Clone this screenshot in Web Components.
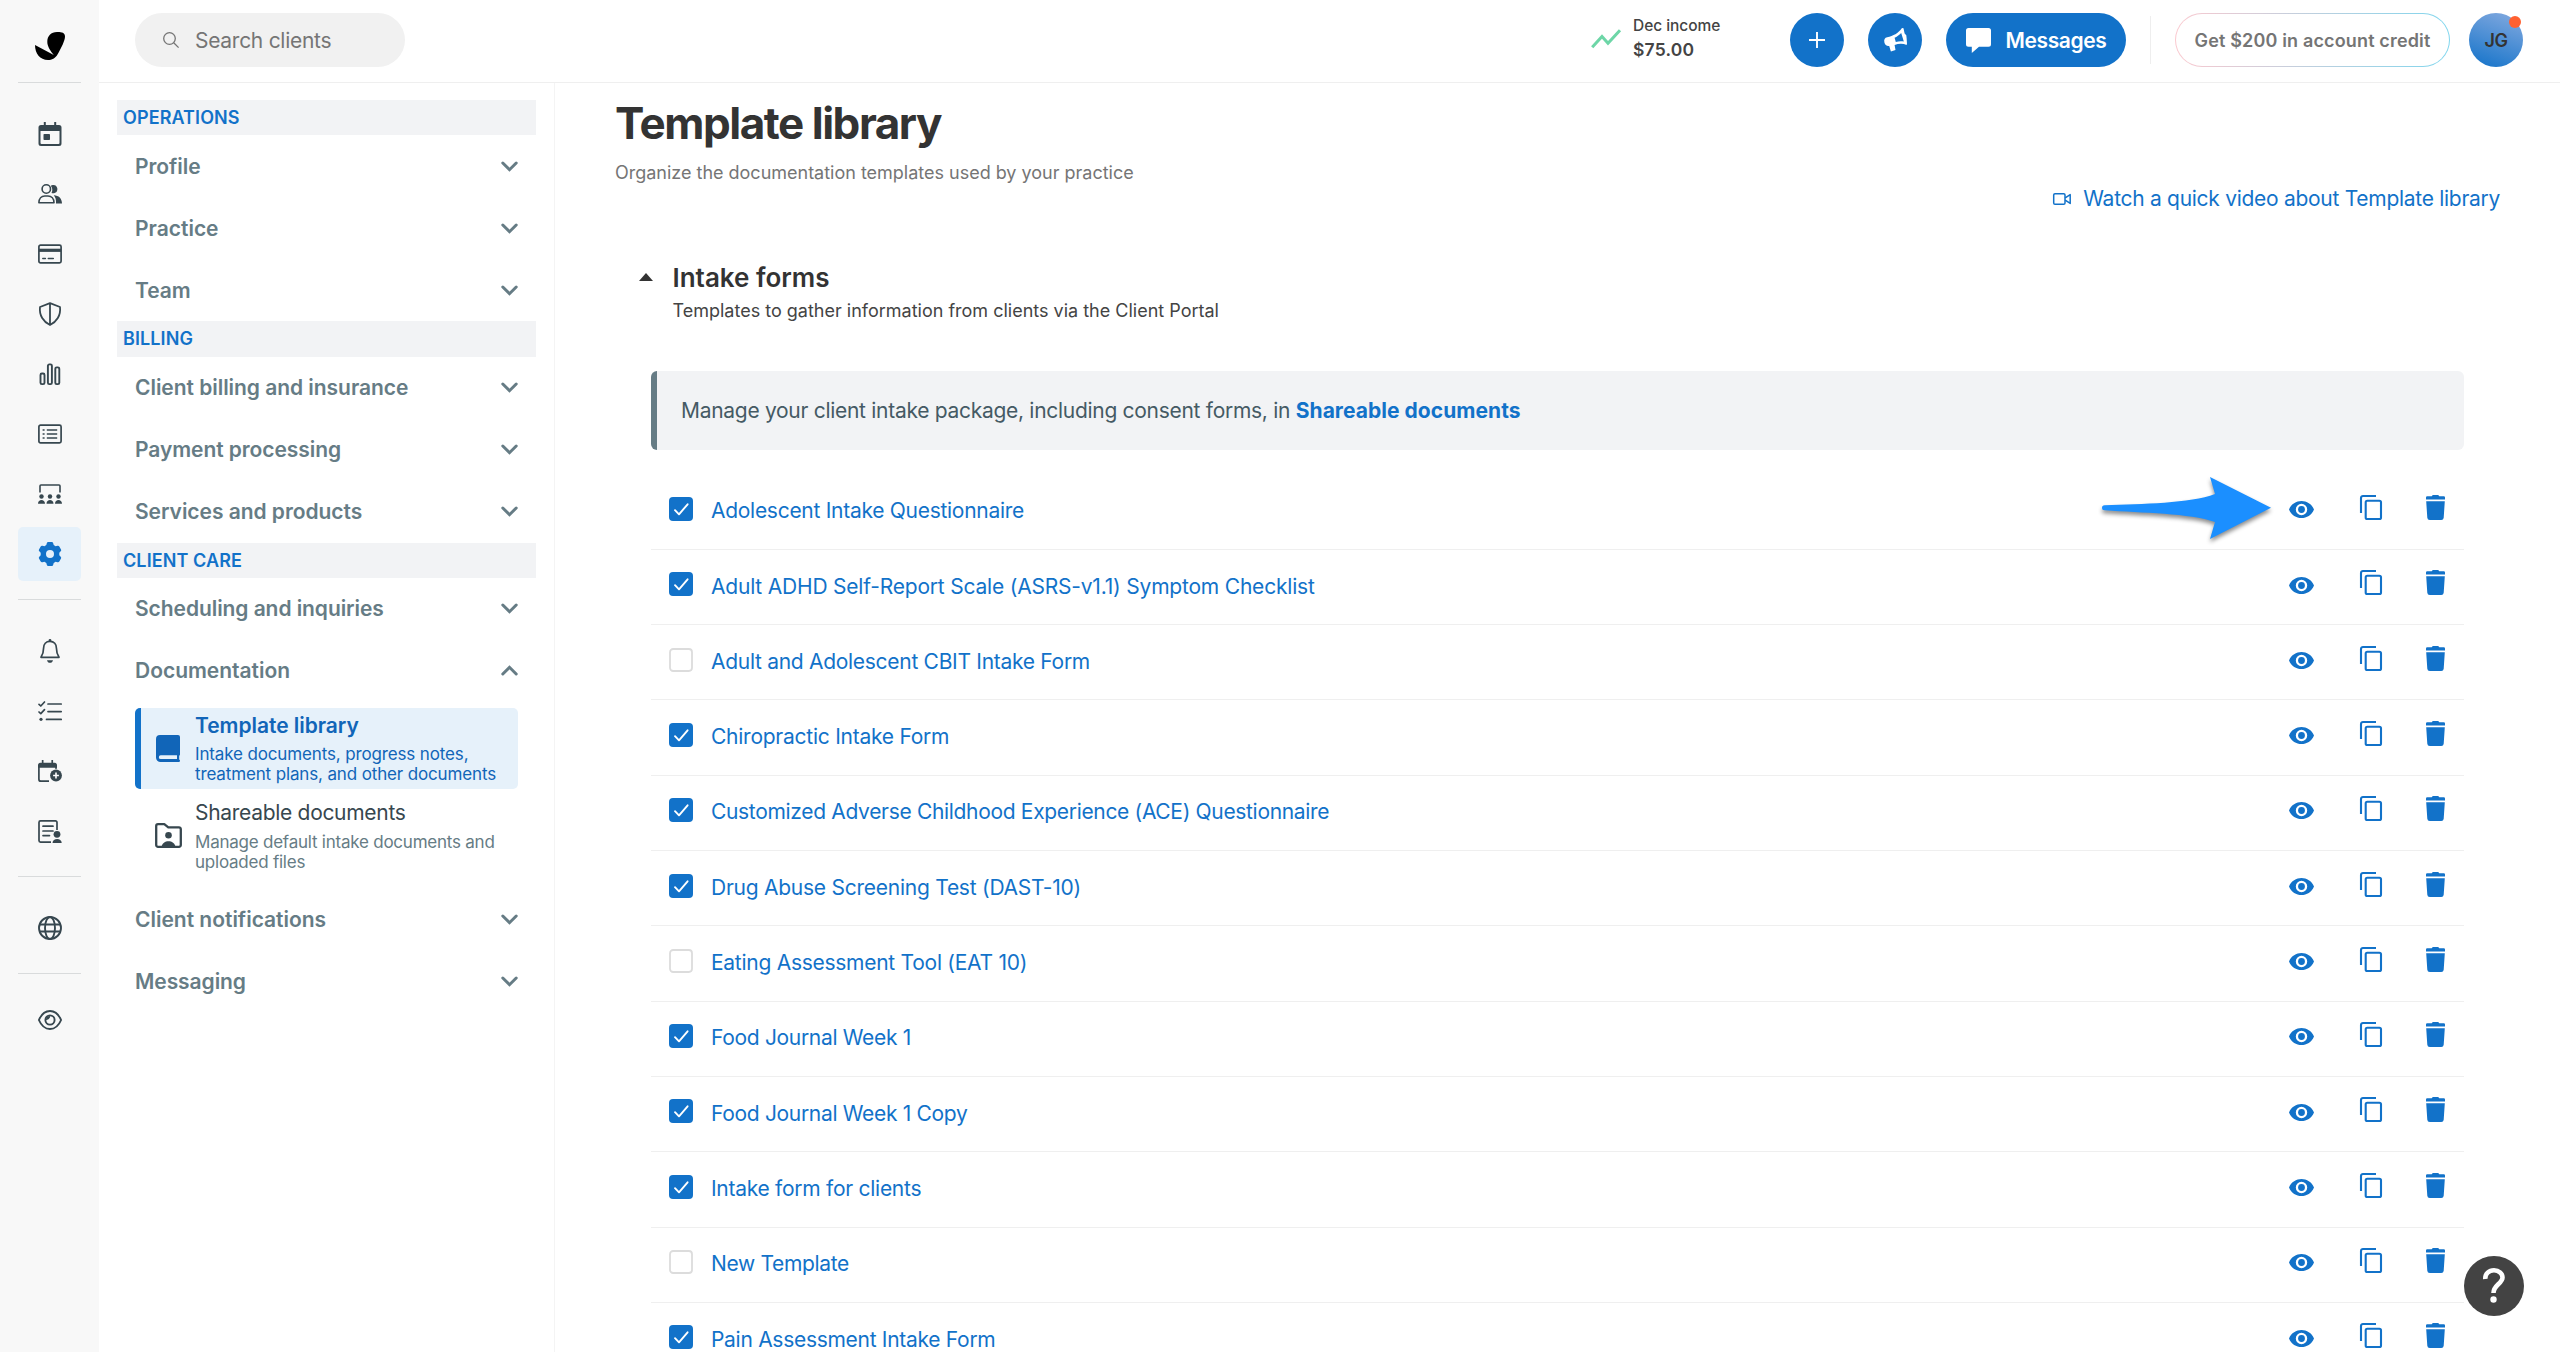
<!DOCTYPE html>
<html lang="en">
<head>
<meta charset="utf-8">
<title>Template library</title>
<style>
html,body{margin:0;height:100%;overflow:hidden;background:#fff}
body{font-family:Inter,"Liberation Sans",sans-serif;color:#333}
</style>
</head>
<body>
<app-shell>
  <nav-rail slot="rail"></nav-rail>
  <top-bar slot="top"></top-bar>
  <settings-nav slot="side">
    <nav-section label="OPERATIONS">
      <nav-item ls="-.05px">Profile</nav-item>
      <nav-item ls="0px">Practice</nav-item>
      <nav-item>Team</nav-item>
    </nav-section>
    <nav-section label="BILLING">
      <nav-item ls="-.04px">Client billing and insurance</nav-item>
      <nav-item>Payment processing</nav-item>
      <nav-item ls="-.04px">Services and products</nav-item>
    </nav-section>
    <nav-section label="CLIENT CARE">
      <nav-item>Scheduling and inquiries</nav-item>
      <nav-item ls="-.02px">Documentation</nav-item>
      <nav-card active icon="book" text="Intake documents, progress notes, treatment plans, and other documents">Template library</nav-card>
      <nav-card icon="folder" text="Manage default intake documents and uploaded files">Shareable documents</nav-card>
      <nav-item ls="-.01px">Client notifications</nav-item>
      <nav-item>Messaging</nav-item>
    </nav-section>
  </settings-nav>
  <library-page slot="main"></library-page>
</app-shell>

<script>
const ICONS = {
  logo: ['0 0 30 28', '<path fill="#000" d="M22 .1C26.500 0 30 .6 30 4.500C30 8.500 26.500 15.500 22.500 22.500C20 26.500 17 28 13 28C5 28 0 21.500 0 13L18.800 23C15.500 19 12.300 14.500 12.300 10C12.300 4 16 .2 22 .1Z"/>'],
  search: ['0 0 16 16', '<g fill="none" stroke="currentColor" stroke-width="1.300"><circle cx="6.500" cy="6.500" r="5.800"/><path d="M10.700 10.700L15.600 15.600"/></g>'],
  calendar: ['0 0 24 24', '<path fill="currentColor" d="M5.800 0h2v3h8.400V0h2v3H21a2.500 2.500 0 0 1 2.500 2.500v16A2.500 2.500 0 0 1 21 24H3A2.500 2.500 0 0 1 .5 21.500v-16A2.500 2.500 0 0 1 3 3h2.800zM2.500 9v12a1 1 0 0 0 1 1h17a1 1 0 0 0 1-1V9z" fill-rule="evenodd"/><rect x="5.500" y="12" width="6.500" height="6" rx=".8" fill="currentColor"/>'],
  people: ['0 0 24 20', '<circle cx="8.300" cy="5" r="4.200" fill="none" stroke="currentColor" stroke-width="1.600"/><path fill="none" stroke="currentColor" stroke-width="1.600" stroke-linejoin="round" d="M.9 18.800C.9 14.400 3.500 12 6.800 12H10c3.400 0 6 2.400 6 6.800z"/><path fill="currentColor" d="M12.800 1.700A4.200 4.200 0 1 1 13.500 9a7 7 0 0 0-.7-7.300M15.800 11.200c5 .2 8.200 3.200 8.200 8.400h-6c.2-3.600-.4-6.400-2.200-8.400"/>'],
  card: ['0 0 24 20', '<rect x=".9" y="1.200" width="22.200" height="17.600" rx="1.600" fill="none" stroke="currentColor" stroke-width="1.700"/><path d="M1 6.300h22" stroke="currentColor" stroke-width="3.200"/><path d="M4.800 14.500h2.600M10.300 14.500h5" stroke="currentColor" stroke-width="1.500" stroke-linecap="round"/>'],
  shield: ['0 0 24 24', '<path fill="none" stroke="currentColor" stroke-width="1.800" stroke-linejoin="round" d="M12 1.200L22 5C23 13.500 18.500 20 12 23C5.500 20 1 13.500 2 5zM12 1.200V23"/>'],
  bars: ['0 0 24 22', '<g fill="none" stroke="currentColor" stroke-width="1.900"><rect x="2.500" y="10.500" width="4" height="10.600" rx="1.400"/><rect x="9.900" y="1.400" width="4" height="19.700" rx="1.400"/><rect x="17.300" y="4.400" width="4" height="16.700" rx="1.400"/></g>'],
  list: ['0 0 24 20', '<rect x=".9" y="1.200" width="22.200" height="17.600" rx="1.600" fill="none" stroke="currentColor" stroke-width="1.700"/><path d="M4.600 6h2M4.600 10h2M4.600 14h2M8.800 6h10.400M8.800 10h10.400M8.800 14h10.400" stroke="currentColor" stroke-width="1.400"/>'],
  classroom: ['0 0 24 20', '<path fill="none" stroke="currentColor" stroke-width="1.600" d="M2 8.500V2A1 1 0 0 1 3 1h18a1 1 0 0 1 1 1v6.500"/><g fill="currentColor"><circle cx="3.500" cy="12.500" r="2.200"/><circle cx="12" cy="12.500" r="2.200"/><circle cx="20.500" cy="12.500" r="2.200"/><path d="M0 19.700c0-5 7-5 7 0zM8.500 19.700c0-5 7-5 7 0zM17 19.700c0-5 7-5 7 0z"/></g>'],
  gear: ['0 0 24 24', '<path fill="currentColor" fill-rule="evenodd" d="M10.300 0h3.400c.8 0 1.300.4 1.500 1.200l.5 1.900 1.900 1.100 1.900-.5c.8-.2 1.400 0 1.800.7l1.700 3c.4.700.3 1.300-.3 1.900L21.300 10.700v2.600l1.400 1.400c.6.6.7 1.200.3 1.900l-1.700 3c-.4.700-1 .9-1.800.7l-1.900-.5-1.900 1.100-.5 1.900c-.2.800-.7 1.200-1.500 1.200h-3.400c-.8 0-1.300-.4-1.500-1.200l-.5-1.900-1.900-1.100-1.900.5c-.8.2-1.400 0-1.800-.7l-1.700-3c-.4-.7-.3-1.300.3-1.900l1.400-1.400v-2.600L1.300 9.300C.7 8.700.6 8.100 1 7.400l1.700-3c.4-.7 1-.9 1.800-.7l1.900.5 1.900-1.100.5-1.900C9 .4 9.500 0 10.300 0M12 8a4 4 0 1 0 0 8a4 4 0 0 0 0-8"/>'],
  bell: ['0 0 24 24', '<path fill="none" stroke="currentColor" stroke-width="1.700" stroke-linejoin="round" d="M12 2.400C7.900 2.400 5.600 5.200 5.600 9C5.600 14 4.700 15.500 3 18.300H21C19.300 15.500 18.400 14 18.400 9C18.400 5.200 16.100 2.400 12 2.400Z"/><path fill="currentColor" d="M10.600 1.400a1.400 1.400 0 0 1 2.800 0v1.500h-2.800zM9 21.300h6c-.5 3.400-5.500 3.400-6 0"/>'],
  checks: ['0 0 24 20', '<g fill="none" stroke="currentColor" stroke-width="1.700" stroke-linecap="round" stroke-linejoin="round"><path d="M1 3.300L2.800 5L6.500 1M1 11L2.800 12.700L6.500 8.700M10 3h13.200M10 10.600h13.200M8.500 18.400h14.700"/></g><circle cx="3" cy="18.300" r="1.600" fill="currentColor"/>'],
  calplus: ['0 0 24 22', '<path fill="none" stroke="currentColor" stroke-width="1.700" d="M18 9V5.500M.9 6v13.200a2 2 0 0 0 2 2H11"/><path fill="currentColor" d="M3.800 0h1.700v2.800h7.900V0h1.700v2.800h1.400A2.500 2.500 0 0 1 19 5.300V7.800H0V5.300A2.500 2.500 0 0 1 2.500 2.800h1.300z"/><circle cx="18" cy="15.500" r="6.800" fill="#f8f8f8"/><circle cx="18" cy="15.500" r="5.900" fill="currentColor"/><path d="M18 12.600v5.800M15.100 15.500h5.800" stroke="#fff" stroke-width="1.600"/>'],
  docuser: ['0 0 24 23', '<path fill="none" stroke="currentColor" stroke-width="1.700" d="M19 10V2.400A1.500 1.500 0 0 0 17.500.9h-15A1.500 1.500 0 0 0 1 2.400v18.200A1.500 1.500 0 0 0 2.500 22.100H13"/><path d="M5 6.200h10M5 11h10M5 15.600h6.500" stroke="currentColor" stroke-width="1.700" stroke-linecap="round"/><circle cx="19" cy="14.300" r="3.400" fill="currentColor"/><path fill="currentColor" d="M14.500 23c0-5.500 9.200-5.500 9.200 0z"/>'],
  globe: ['0 0 24 24', '<g fill="none" stroke="currentColor" stroke-width="1.900"><circle cx="12" cy="12" r="11"/><ellipse cx="12" cy="12" rx="5" ry="11"/><path d="M1.500 8.500h21M1.500 15.500h21"/></g>'],
  eyeline: ['0 0 24 20', '<path fill="none" stroke="currentColor" stroke-width="1.900" stroke-linejoin="round" d="M.9 10C6-2 18-2 23.100 10C18 22 6 22 .9 10Z"/><circle cx="12" cy="10" r="4.600" fill="none" stroke="currentColor" stroke-width="1.900"/><path fill="currentColor" d="M8 10a4 4 0 0 1 4-4c.6 1.500-1.500 4-4 4"/>'],
  down: ['0 0 17 11', '<path fill="none" stroke="currentColor" stroke-width="3" stroke-linecap="round" d="M1.800 2L8.500 8.700L15.200 2"/>'],
  up: ['0 0 17 11', '<path fill="none" stroke="currentColor" stroke-width="3" stroke-linecap="round" d="M1.800 9L8.500 2.300L15.200 9"/>'],
  book: ['0 0 24 27', '<path fill="#1165b8" fill-rule="evenodd" d="M4 0H22a2 2 0 0 1 2 2V19.500a1.500 1.500 0 0 1-.8 1.300v3.600c.5.200.8.700.8 1.300S23.500 27 22.800 27H4.500A4.500 4.500 0 0 1 0 22.500V4A4 4 0 0 1 4 0M4.700 20.300a1.850 1.850 0 0 0 0 3.700H21V20.300z"/>'],
  folder: ['0 0 27 25', '<path fill="none" stroke="#37474f" stroke-width="2.300" stroke-linejoin="round" d="M3 1.200H9.300L13.300 4.400H24A1.800 1.800 0 0 1 25.800 6.200V22A1.800 1.800 0 0 1 24 23.800H3A1.800 1.800 0 0 1 1.200 22V3A1.800 1.800 0 0 1 3 1.200Z"/><circle cx="13.500" cy="12.300" r="3.300" fill="#37474f"/><path fill="#37474f" d="M6.500 24C7.500 16.200 19.500 16.200 20.500 24Z"/>'],
  trend: ['0 0 30 20', '<path fill="none" stroke="#6dd6a7" stroke-width="3" stroke-linejoin="miter" d="M1.200 18.300L11 7.500L17 14.200L29 1.200"/>'],
  plus: ['0 0 16 16', '<path stroke="#fff" stroke-width="1.900" d="M8 0v16M0 8h16"/>'],
  horn: ['0 0 23 24', '<path fill="#fff" fill-rule="evenodd" d="M18 0L19.500 .2L20.600 5.600Q23 7 22.600 10L23 15.600L22.600 17C19 15.400 14.500 15.600 10.600 17L11.500 22L6.900 23.400L5.200 18C2.800 18.300 1 17.300 .4 14.600C-.3 11.500 .8 9.700 3.200 9.200C9.500 7.800 14 5.500 18 0ZM17.200 5C15.200 7.200 12.800 8.800 10.600 9.800L11.800 14C14.500 13.100 17.200 12.900 19.800 13.500Z"/>'],
  chat: ['0 0 25 25', '<path fill="#fff" d="M2.500 0h20A2.500 2.500 0 0 1 25 2.500v13.800a2.500 2.500 0 0 1-2.500 2.500H13L5.800 25V18.800H2.500A2.500 2.500 0 0 1 0 16.300V2.500A2.500 2.500 0 0 1 2.500 0"/>'],
  video: ['0 0 18 12', '<g fill="none" stroke="#1272c9" stroke-width="1.500"><rect x=".7" y=".7" width="11.300" height="10.600" rx="1.300"/><path stroke-linejoin="round" d="M12.200 4.800L17.200 1.600V10.400L12.200 7.200"/></g>'],
  tri: ['0 0 14 8', '<path fill="#333" d="M0 8L7 0L14 8Z"/>'],
  check: ['0 0 24 24', '<rect width="24" height="24" rx="4" fill="#1272c9"/><path fill="none" stroke="#fff" stroke-width="1.900" stroke-linecap="round" stroke-linejoin="round" d="M6 13.200L10 17.300L18.600 7.300"/>'],
  box: ['0 0 24 24', '<rect x="1" y="1" width="22" height="22" rx="3.200" fill="#fff" stroke="#dcdcdc" stroke-width="1.800"/>'],
  eye: ['0 0 25 17', '<path fill="#1272c9" fill-rule="evenodd" d="M0 8.500C4.500-2.900 20.500-2.900 25 8.500C20.500 19.900 4.500 19.900 0 8.500M12.500 2.800a5.700 5.700 0 1 0 0 11.400a5.700 5.700 0 0 0 0-11.400"/><circle cx="12.500" cy="8.500" r="3.400" fill="#1272c9"/>'],
  copy: ['0 0 22 25', '<g fill="none" stroke="#1272c9" stroke-width="2.100"><path d="M1 18V3a2 2 0 0 1 2-2H16"/><rect x="5.700" y="5.700" width="15.300" height="18.300" rx="1.600"/></g>'],
  trash: ['0 0 19 25', '<path fill="#1272c9" d="M1.200 1.200H5.700L6.800 0h5.400l1.100 1.200h4.500A1.200 1.200 0 0 1 19 2.400V4.400H0V2.400A1.200 1.200 0 0 1 1.200 1.200M.2 6.200H18.800L17.700 22.700A2.500 2.500 0 0 1 15.200 25H3.800A2.500 2.500 0 0 1 1.300 22.700Z"/>'],
  question: ['0 0 22 36', '<path fill="none" stroke="#fff" stroke-width="4.600" d="M2.300 11C2 5.500 6 2.300 11 2.300C16 2.300 19.500 5.500 19.500 9.500C19.500 15.500 10.500 17 10.500 25"/><circle cx="10.500" cy="31.500" r="3.200" fill="#fff"/>'],
  arrow: ['0 0 170 64', '<path fill="#1b8fff" d="M2.500 28.200C40 26.800 88 26.500 113 17L108 0L169 30.800L108 62L113 45C88 36 40 36 2.500 33.200A2.500 2.500 0 0 1 2.500 28.200Z"/>']
};

const define = (name, css, html) => customElements.define(name, class extends HTMLElement {
  connectedCallback() {
    if (this.shadowRoot) return;
    const root = this.attachShadow({ mode: 'open' });
    root.innerHTML = `<style>:host,*{box-sizing:border-box}${css}</style>${typeof html === 'function' ? html(this) : html}`;
  }
});

define('sp-icon', ':host{display:block;flex:none}svg{display:block;width:100%;height:100%;overflow:visible}', el => {
  const [box, body] = ICONS[el.getAttribute('name')];
  const [, , w, h] = box.split(' ');
  el.style.width = w + 'px';
  el.style.height = h + 'px';
  return `<svg viewBox="${box}" preserveAspectRatio="none">${body}</svg>`;
});

define('app-shell', `:host{display:grid;grid-template-columns:99px 1fr;height:1352px;overflow:hidden}
.col{display:grid;grid-template-rows:83px 1fr;min-width:0;min-height:0}
.body{display:grid;grid-template-columns:456px 1fr;min-height:0}`,
`<slot name="rail"></slot><div class="col"><slot name="top"></slot><div class="body"><slot name="side"></slot><slot name="main"></slot></div></div>`);

define('rail-item', `:host{display:flex;height:60px;align-items:center;justify-content:center;width:63px;color:#37474f}
:host([active]){color:#1272c9;height:54px;margin:3px 0;background:#e6f1fa;border-radius:5px}`,
el => `<sp-icon name="${el.getAttribute('icon')}"></sp-icon>`);

define('nav-rail', `:host{display:flex;flex-direction:column;align-items:center;background:#f8f8f8;height:1352px}
.logo{height:82px;padding-top:32px}
hr{width:63px;height:1px;border:0;background:#d9dbdc;margin:0;flex:none}`,
`<div class="logo"><sp-icon name="logo"></sp-icon></div><hr>
<rail-item icon="calendar" style="margin-top:21px"></rail-item><rail-item icon="people"></rail-item><rail-item icon="card"></rail-item><rail-item icon="shield"></rail-item><rail-item icon="bars"></rail-item><rail-item icon="list"></rail-item><rail-item icon="classroom"></rail-item><rail-item icon="gear" active></rail-item>
<hr style="margin:15px 0 21px"><rail-item icon="bell"></rail-item><rail-item icon="checks"></rail-item><rail-item icon="calplus"></rail-item><rail-item icon="docuser"></rail-item>
<hr style="margin:15px 0 21px"><rail-item icon="globe"></rail-item><hr style="margin:15px 0 16px"><rail-item icon="eyeline"></rail-item>`);

define('top-bar', `:host{display:flex;align-items:center;height:83px;border-bottom:1px solid #efefef;padding:0 37px 2px 36px}
.search{display:flex;align-items:center;width:270px;height:54px;border-radius:27px;background:#f1f1f1;color:#757575;padding-left:28px;gap:16px;font-size:21px;letter-spacing:-.28px}
.income{display:flex;align-items:center;gap:12px;margin-left:auto;width:199px;color:#444}
.income div{display:flex;flex-direction:column;margin-top:-4.600px}
.income sp-icon{margin-top:-3px}
.a{font-size:15.500px;font-weight:500;line-height:24px;letter-spacing:-.05px}
.b{font-size:17.500px;font-weight:600;line-height:24px;letter-spacing:.2px}
.btn{display:flex;align-items:center;justify-content:center;height:54px;width:54px;border-radius:27px;background:#1272c9;flex:none}
.msg{width:180px;gap:15px;color:#fff;font-weight:600;font-size:21px;letter-spacing:-.38px}
.sep{width:1px;height:48px;background:#eee;margin:0 24px}
.credit{width:275px;height:54px;border-radius:27px;border:1.500px solid transparent;background:linear-gradient(#fff,#fff) padding-box,linear-gradient(90deg,#fbc9cf,#7fd6ee) border-box;display:flex;align-items:center;justify-content:center;font-size:18px;font-weight:600;color:#757575;letter-spacing:.16px}
.av{position:relative;margin-left:19px;background:linear-gradient(20deg,#1272c9,#86abe0);color:#333;font-size:18px;font-weight:600;letter-spacing:-.4px}
.dot{position:absolute;right:2px;top:3px;width:12px;height:12px;border-radius:50%;background:#ff6030}`,
`<div class="search"><sp-icon name="search"></sp-icon><span>Search clients</span></div>
<div class="income"><sp-icon name="trend"></sp-icon><div><span class="a">Dec income</span><span class="b">$75.00</span></div></div>
<div class="btn"><sp-icon name="plus"></sp-icon></div>
<div class="btn" style="margin:0 24px"><sp-icon name="horn"></sp-icon></div>
<div class="btn msg"><sp-icon name="chat"></sp-icon><span>Messages</span></div>
<div class="sep"></div><div class="credit">Get $200 in account credit</div>
<div class="btn av">JG<i class="dot"></i></div>`);

define('settings-nav', `:host{display:flex;flex-direction:column;padding:17px 18px 0;border-right:1px solid #f4f4f4}`, `<slot></slot>`);

define('nav-section', `:host{display:flex;flex-direction:column;flex:none}
.bar{height:35.300px;background:#f2f3f5;color:#1272c9;font-size:18px;font-weight:600;line-height:35px;padding-left:6px;letter-spacing:.1px}`,
el => `<div class="bar">${el.getAttribute('label')}</div><slot></slot>`);

define('nav-item', `:host{display:flex;height:62px;align-items:center;justify-content:space-between;padding:0 18.500px 0 18px;color:#667c85;font-size:21px;font-weight:600;letter-spacing:-.07px}`,
el => { if (el.getAttribute('ls')) el.style.letterSpacing = el.getAttribute('ls');
  const open = el.nextElementSibling && el.nextElementSibling.localName === 'nav-card';
  return `<span><slot></slot></span><sp-icon name="${open ? 'up' : 'down'}"></sp-icon>`; });

define('nav-card', `:host{display:flex;align-items:center;margin:6.500px 18px 12.500px 18px;height:80px;padding-left:20px;color:#667c85}
:host([active]){background:#e6f1fa;border-left:6px solid #1272c9;border-radius:5px;padding-left:15px;height:81px;margin-top:6.500px;margin-bottom:.5px}
:host([active]) sp-icon{margin-right:15px}sp-icon{margin:-1px 13px 0 0}
.t{font-size:21px;line-height:24.400px;margin-bottom:6px;letter-spacing:-.3px;color:#37474f}
:host([active]) .t{font-weight:600;color:#1165b8;letter-spacing:-.04px}
.d{font-size:17px;line-height:20px;letter-spacing:-.23px;width:312px}
:host([active]) .d{color:#1165b8;letter-spacing:-.14px}`,
el => `<sp-icon name="${el.getAttribute('icon')}"></sp-icon><div><div class="t"><slot></slot></div><div class="d">${el.getAttribute('text')}</div></div>`);

define('template-row', `:host{display:flex;flex:none;height:75.300px;border-bottom:1px solid #efefef;padding:0 19px 0 18px;align-items:flex-start}
.lab{font-size:21px;line-height:30px;color:#1272c9;letter-spacing:-.27px;margin:21.700px auto 0 18px}
.chk{margin-top:22.500px}
.acts{display:flex;align-items:flex-start;margin-top:20.500px}`,
el => `<sp-icon class="chk" name="${el.hasAttribute('off') ? 'box' : 'check'}"></sp-icon>
<span class="lab" style="${el.getAttribute('ls') ? 'letter-spacing:' + el.getAttribute('ls') : ''}"><slot></slot></span>
<div class="acts"><sp-icon name="eye" style="margin-top:6.200px"></sp-icon><sp-icon name="copy" style="margin:0 44px 0 46px"></sp-icon><sp-icon name="trash"></sp-icon></div>`);

define('info-banner', `:host{display:block;flex:none;height:79px;border-left:6px solid #667c85;border-radius:6px;background:#f2f3f5;color:#455a64;font-size:21px;line-height:79px;padding-left:24px;letter-spacing:-.29px}
::slotted(b){color:#1272c9;letter-spacing:.05px}`, `<slot></slot>`);

define('callout-arrow', `:host{position:absolute;left:2102px;top:477px;filter:drop-shadow(0 3px 2px rgba(0,0,0,.45))}`, `<sp-icon name="arrow"></sp-icon>`);
define('help-button', `:host{position:absolute;left:2464px;top:1256px;width:60px;height:60px;border-radius:50%;background:#434343;display:flex;align-items:center;justify-content:center}`, `<sp-icon name="question"></sp-icon>`);

define('library-page', `:host{display:flex;flex-direction:column;padding:0 60px 0 60px;min-width:0;min-height:0;overflow:hidden}
h1,.sub,.watch,.head,.rows{flex:none}
h1{margin:12.700px 0 0;font-size:44px;line-height:54px;font-weight:700;letter-spacing:-1.460px;color:#333}
.sub{font-size:18px;line-height:24px;color:#757575;letter-spacing:-.01px;margin-top:11.300px}
.watch{display:flex;align-self:flex-end;align-items:center;gap:12.500px;font-size:21px;line-height:30px;color:#1272c9;letter-spacing:-.285px;margin-top:-1px}
.head{display:flex;gap:19.500px;padding-left:24px;margin-top:47px;height:61.500px}
.head sp-icon{margin-top:12px}
h2{margin:0 0 4.500px;font-size:26px;line-height:34px;font-weight:600;color:#333}
.desc{font-size:18px;line-height:24px;color:#444}
info-banner{margin:48.500px 36px 24.600px 36px}
.rows{display:flex;flex-direction:column;margin:0 36px}`,
`<h1>Template library</h1><div class="sub">Organize the documentation templates used by your practice</div>
<div class="watch"><sp-icon name="video"></sp-icon><span>Watch a quick video about Template library</span></div>
<div class="head"><sp-icon name="tri"></sp-icon><div><h2>Intake forms</h2><div class="desc">Templates to gather information from clients via the Client Portal</div></div></div>
<info-banner>Manage your client intake package, including consent forms, in <b>Shareable documents</b></info-banner>
<div class="rows">
<template-row ls="-.28px">Adolescent Intake Questionnaire</template-row>
<template-row ls="-.2px">Adult ADHD Self-Report Scale (ASRS-v1.1) Symptom Checklist</template-row>
<template-row off ls="-.29px">Adult and Adolescent CBIT Intake Form</template-row>
<template-row ls="-.25px">Chiropractic Intake Form</template-row>
<template-row ls="-.325px">Customized Adverse Childhood Experience (ACE) Questionnaire</template-row>
<template-row ls="-.25px">Drug Abuse Screening Test (DAST-10)</template-row>
<template-row off>Eating Assessment Tool (EAT 10)</template-row>
<template-row ls="-.32px">Food Journal Week 1</template-row>
<template-row ls="-.32px">Food Journal Week 1 Copy</template-row>
<template-row>Intake form for clients</template-row>
<template-row off ls="-.34px">New Template</template-row>
<template-row ls="-.29px">Pain Assessment Intake Form</template-row>
</div>
<callout-arrow></callout-arrow><help-button></help-button>`);
</script>
</body>
</html>
